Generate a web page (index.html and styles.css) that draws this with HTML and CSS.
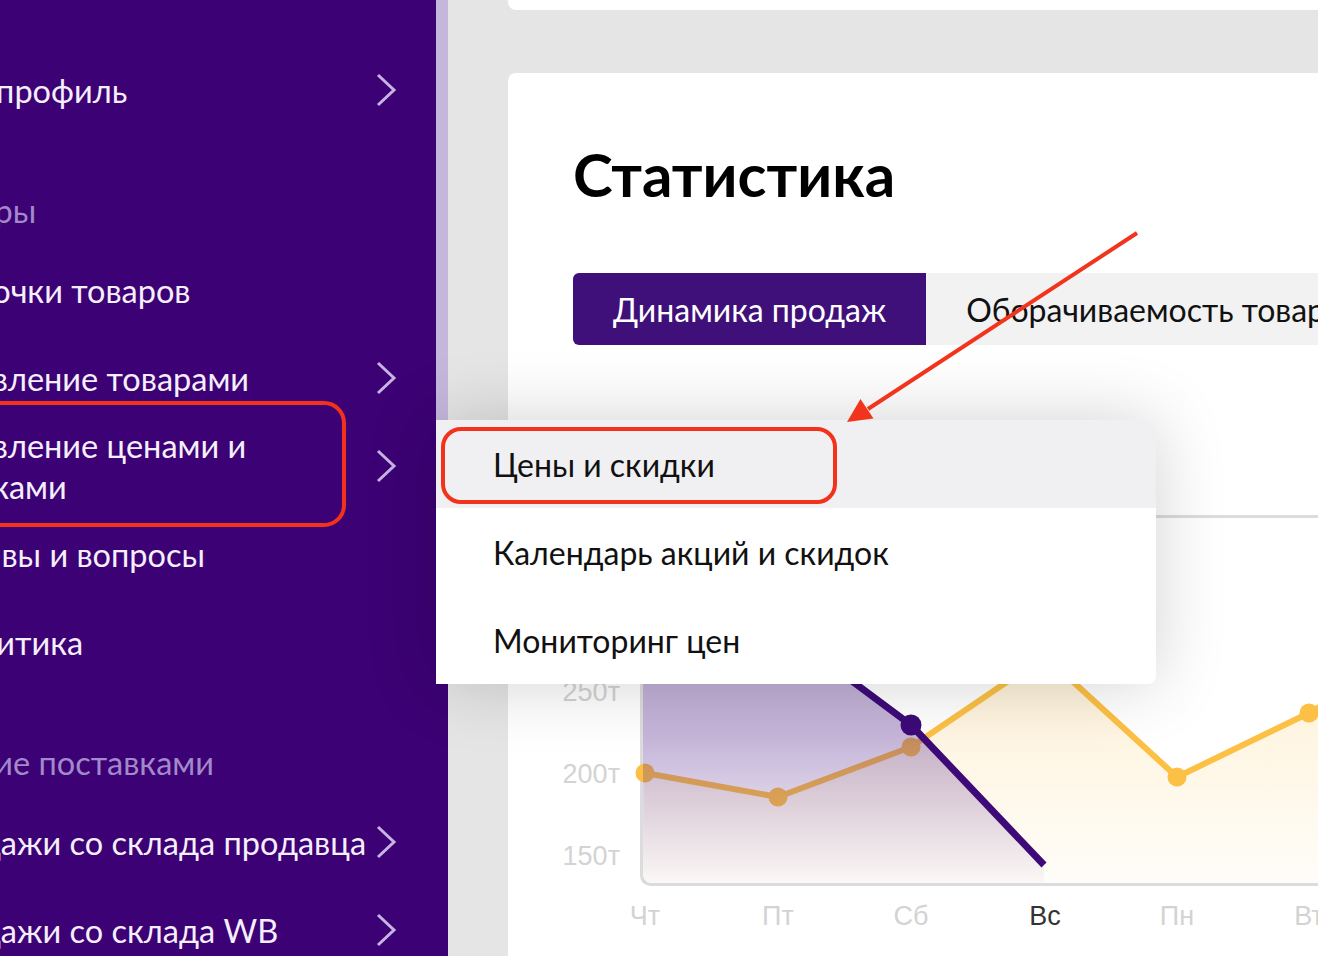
FILE: index.html
```html
<!DOCTYPE html>
<html lang="ru">
<head>
<meta charset="utf-8">
<title>Статистика</title>
<link rel="stylesheet" href="styles.css">
</head>
<body>
<div class="page">
  <aside class="sidebar">
    <ul class="nav">
      <li class="nav-item"><span class="label">Мой профиль</span><svg class="chev" viewBox="0 0 22 34"><path d="M3 2 L19 17 L3 32"/></svg></li>
      <li class="nav-head"><span class="label">Мои товары</span></li>
      <li class="nav-item"><span class="label">Карточки товаров</span></li>
      <li class="nav-item"><span class="label">Управление товарами</span><svg class="chev" viewBox="0 0 22 34"><path d="M3 2 L19 17 L3 32"/></svg></li>
      <li class="nav-item"><span class="label">Управление ценами и<br>скидками</span><svg class="chev" viewBox="0 0 22 34"><path d="M3 2 L19 17 L3 32"/></svg></li>
      <li class="nav-item"><span class="label">Отзывы и вопросы</span></li>
      <li class="nav-item"><span class="label">Аналитика</span></li>
      <li class="nav-head"><span class="label">Управление поставками</span></li>
      <li class="nav-item"><span class="label">Продажи со склада продавца</span><svg class="chev" viewBox="0 0 22 34"><path d="M3 2 L19 17 L3 32"/></svg></li>
      <li class="nav-item"><span class="label">Продажи со склада WB</span><svg class="chev" viewBox="0 0 22 34"><path d="M3 2 L19 17 L3 32"/></svg></li>
    </ul>
  </aside>
  <main class="main">
    <div class="topcard"></div>
    <section class="card">
      <h1 class="title">Статистика</h1>
      <div class="tabs">
        <div class="tab tab-active">Динамика продаж</div>
        <div class="tab tab-idle">Оборачиваемость товаров</div>
      </div>
      <svg class="chart" width="745" height="420" viewBox="0 0 745 420">
        <defs>
          <linearGradient id="pg" gradientUnits="userSpaceOnUse" x1="0" y1="0" x2="0" y2="371">
            <stop offset="0" stop-color="#5a2d91" stop-opacity="0.47"/>
            <stop offset="0.6" stop-color="#5a2d91" stop-opacity="0.35"/>
            <stop offset="0.82" stop-color="#5a2d91" stop-opacity="0.17"/>
            <stop offset="1" stop-color="#5a2d91" stop-opacity="0.02"/>
          </linearGradient>
          <linearGradient id="yg" gradientUnits="userSpaceOnUse" x1="0" y1="140" x2="0" y2="371">
            <stop offset="0" stop-color="#fcc044" stop-opacity="0.22"/>
            <stop offset="1" stop-color="#fcc044" stop-opacity="0.03"/>
          </linearGradient>
        </defs>
        <rect x="68.5" y="1.5" width="760" height="368" rx="9" fill="#fff" stroke="#dcdcdc" stroke-width="3"/>
        <polygon points="72,258 205,282 338,232 472,141 604,262 736,198 800,160 800,368 70,368" fill="url(#yg)"/>
        <polyline points="72,258 205,282 338,232 472,141 604,262 736,198 800,160" fill="none" stroke="#fcc044" stroke-width="6" stroke-linejoin="round"/>
        <g fill="#fcc044">
          <circle cx="72" cy="258" r="9.5"/>
          <circle cx="205" cy="282" r="9.5"/>
          <circle cx="338" cy="232" r="9.5"/>
          <circle cx="472" cy="141" r="9.5"/>
          <circle cx="604" cy="262" r="9.5"/>
          <circle cx="736" cy="198" r="9.5"/>
        </g>
        <polygon points="70,50 72,50 205,111 338,210 471,350 471,368 70,368" fill="url(#pg)"/>
        <polyline points="72,50 205,111 338,210 471,350" fill="none" stroke="#3d0a78" stroke-width="7" stroke-linejoin="round"/>
        <circle cx="338" cy="210" r="10.5" fill="#3d0a78"/>
        <g class="axis">
          <text x="47" y="186" text-anchor="end">250т</text>
          <text x="47" y="268" text-anchor="end">200т</text>
          <text x="47" y="350" text-anchor="end">150т</text>
          <text x="72" y="410" text-anchor="middle">Чт</text>
          <text x="205" y="410" text-anchor="middle">Пт</text>
          <text x="338" y="410" text-anchor="middle">Сб</text>
          <text class="axis-current" x="472" y="410" text-anchor="middle">Вс</text>
          <text x="604" y="410" text-anchor="middle">Пн</text>
          <text x="736" y="410" text-anchor="middle">Вт</text>
        </g>
      </svg>
    </section>
  </main>
</div>

<div class="dropdown">
  <div class="dd-item dd-active">Цены и скидки</div>
  <div class="dd-item">Календарь акций и скидок</div>
  <div class="dd-item">Мониторинг цен</div>
</div>

<div class="mark mark-side"></div>
<div class="mark mark-dd"></div>
<svg class="arrow" width="1318" height="956" viewBox="0 0 1318 956">
  <line x1="1137" y1="233" x2="868" y2="409" stroke="#f2341d" stroke-width="4"/>
  <polygon points="847,422 873.5,418.5 860.5,399" fill="#f2341d"/>
</svg>
</body>
</html>
```

FILE: styles.css
```css
* { box-sizing: border-box; margin: 0; padding: 0; }
html, body { width: 1318px; height: 956px; overflow: hidden; }
body {
  background: #e5e5e5;
  font-family: Lato, "Noto Sans", sans-serif;
  position: relative;
}
.page { display: flex; height: 956px; }

/* sidebar */
.sidebar {
  width: 448px;
  flex: none;
  background: #3c0174;
  position: relative;
  overflow: hidden;
  padding-top: 46px;
  color: #f4effa;
}
.sidebar::after {
  content: "";
  position: absolute;
  right: 0;
  top: 0;
  width: 12px;
  height: 420px;
  background: #c5b7dc;
}
.nav { list-style: none; }
.nav-item {
  display: flex;
  align-items: center;
  justify-content: space-between;
  height: 88px;
  padding-right: 51px;
  font-size: 32.5px;
  line-height: 41px;
}
.nav-item .label { margin-left: -79px; white-space: nowrap; }
.nav-head {
  padding: 56px 0 15px;
  font-size: 32.5px;
  line-height: 41px;
  color: #a189ca;
  white-space: nowrap;
}
.nav-head .label { margin-left: -147px; }
.chev { width: 22px; height: 34px; flex: none; margin-left: auto; }
.chev path { fill: none; stroke: #c6b5e2; stroke-width: 3; }

/* main */
.main {
  flex: 1;
  padding-left: 60px;
  overflow: hidden;
  display: flex;
  flex-direction: column;
}
.topcard {
  height: 10px;
  background: #fff;
  border-bottom-left-radius: 8px;
  flex: none;
}
.card {
  margin-top: 63px;
  background: #fff;
  border-top-left-radius: 8px;
  flex: 1;
  padding: 65px 0 0 65px;
  overflow: hidden;
}
.title {
  font-size: 60px;
  font-weight: 700;
  line-height: 72px;
  color: #000;
}
.tabs { display: flex; margin-top: 63px; height: 72px; }
.tab {
  display: flex;
  align-items: center;
  padding: 0 40px;
  font-size: 32px;
  white-space: nowrap;
  flex: none;
}
.tab-active { background: #40107a; color: #fff; border-radius: 6px 0 0 6px; }
.tab-idle { background: #f2f2f2; color: #111; flex: 1 0 auto; }
.chart { display: block; margin-top: 170px; overflow: visible; }
.axis { font-family: "Liberation Sans", Arial, sans-serif; font-size: 27px; fill: #d3d3d3; }
.axis .axis-current { fill: #333; }

/* dropdown */
.dropdown {
  position: absolute;
  left: 436px;
  top: 420px;
  width: 720px;
  background: #fff;
  border-radius: 0 8px 8px 0;
  box-shadow: 0 0 70px rgba(0, 0, 0, 0.18);
  z-index: 5;
  overflow: hidden;
}
.dd-item {
  height: 88px;
  display: flex;
  align-items: center;
  padding-left: 57px;
  font-size: 32px;
  color: #111;
}
.dd-active { background: #f0f0f2; }

/* annotations */
.mark {
  position: absolute;
  border: 4px solid #f3321b;
  z-index: 6;
}
.mark-side { left: -20px; top: 401px; width: 366px; height: 126px; border-radius: 22px; }
.mark-dd { left: 441px; top: 427px; width: 396px; height: 77px; border-radius: 20px; }
.arrow { position: absolute; left: 0; top: 0; z-index: 7; pointer-events: none; }
```
